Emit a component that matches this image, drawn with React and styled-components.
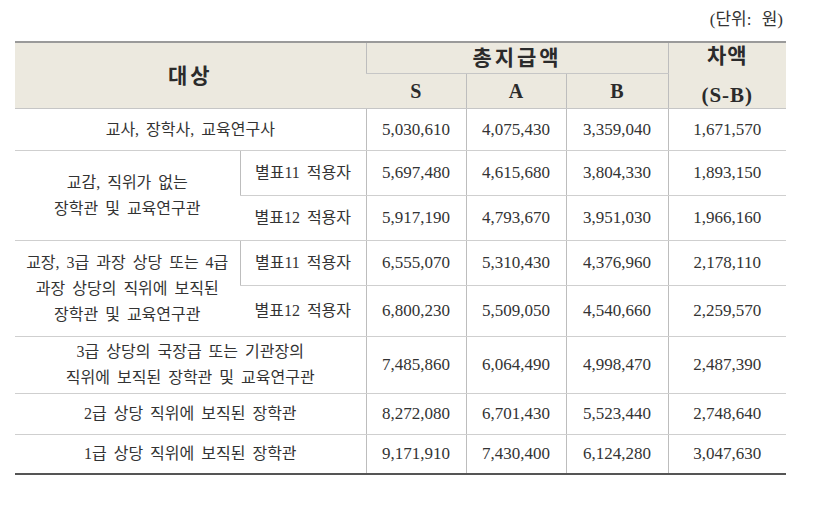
import React from 'react';
import styled, { createGlobalStyle } from 'styled-components';

const GlobalStyle = createGlobalStyle`
  html, body {
    margin: 0;
    padding: 0;
    background: #ffffff;
  }
  body {
    font-family: "Liberation Serif", "Noto Sans CJK KR", serif;
    color: #333333;
  }
`;

const Page = styled.div`
  width: 821px;
  height: 517px;
  padding: 9px 0 0 15px;
  box-sizing: border-box;
`;

const Unit = styled.div`
  width: 768px;
  text-align: right;
  font-size: 17px;
  word-spacing: 6px;
  line-height: 22px;
  height: 32px;
  color: #333;
`;

const Table = styled.table`
  width: 771px;
  table-layout: fixed;
  border-collapse: collapse;
  border-top: 2px solid #9a9a9a;
  border-bottom: 2px solid #555;
`;

const Th = styled.th`
  background: #ece9df;
  font-weight: bold;
  font-size: ${(p) => p.$size || 21}px;
  letter-spacing: ${(p) => p.$spacing || 0}px;
  height: ${(p) => p.$h}px;
  padding: 0;
  color: #2b2b2b;
  border-left: 1px solid #bdbdbd;
  border-bottom: 1px solid #c6c6c6;
  vertical-align: middle;
  line-height: 24px;
  &:first-child {
    border-left: none;
  }
`;

const HeadLine = styled.div`
  line-height: 24px;
  & + & {
    margin-top: 15px;
  }
`;

const Td = styled.td`
  font-size: ${(p) => (p.$num ? 17 : 16)}px;
  text-align: center;
  vertical-align: middle;
  padding: 0;
  height: ${(p) => p.$h}px;
  line-height: 26px;
  border-left: 1px solid #bdbdbd;
  border-bottom: 1px solid #cfcfcf;
  word-spacing: 3px;
  &:first-child {
    border-left: none;
  }
`;

const rows = [
  { label: '교사, 장학사, 교육연구사', vals: ['5,030,610', '4,075,430', '3,359,040', '1,671,570'], h: 41 },
];

const groups = [
  {
    label: ['교감, 직위가 없는', '장학관 및 교육연구관'],
    subs: [
      { sub: '별표11 적용자', vals: ['5,697,480', '4,615,680', '3,804,330', '1,893,150'], h: 44 },
      { sub: '별표12 적용자', vals: ['5,917,190', '4,793,670', '3,951,030', '1,966,160'], h: 44 },
    ],
  },
  {
    label: ['교장, 3급 과장 상당 또는 4급', '과장 상당의 직위에 보직된', '장학관 및 교육연구관'],
    subs: [
      { sub: '별표11 적용자', vals: ['6,555,070', '5,310,430', '4,376,960', '2,178,110'], h: 44 },
      { sub: '별표12 적용자', vals: ['6,800,230', '5,509,050', '4,540,660', '2,259,570'], h: 50 },
    ],
  },
];

const tail = [
  { label: ['3급 상당의 국장급 또는 기관장의', '직위에 보직된 장학관 및 교육연구관'], vals: ['7,485,860', '6,064,490', '4,998,470', '2,487,390'], h: 56 },
  { label: ['2급 상당 직위에 보직된 장학관'], vals: ['8,272,080', '6,701,430', '5,523,440', '2,748,640'], h: 40 },
  { label: ['1급 상당 직위에 보직된 장학관'], vals: ['9,171,910', '7,430,400', '6,124,280', '3,047,630'], h: 38 },
];

const Lines = ({ lines }) =>
  lines.map((l, i) => (
    <React.Fragment key={i}>
      {i > 0 && <br />}
      {l}
    </React.Fragment>
  ));

export default function App() {
  return (
    <Page>
      <GlobalStyle />
      <Unit>(단위: 원)</Unit>
      <Table>
        <colgroup>
          <col style={{ width: 225 }} />
          <col style={{ width: 126 }} />
          <col style={{ width: 100 }} />
          <col style={{ width: 100 }} />
          <col style={{ width: 102 }} />
          <col style={{ width: 118 }} />
        </colgroup>
        <thead>
          <tr>
            <Th colSpan={2} rowSpan={2} $spacing={3}>대상</Th>
            <Th colSpan={3} $h={30} $spacing={3}>총지급액</Th>
            <Th rowSpan={2} $spacing={1}>
              <HeadLine>차액</HeadLine>
              <HeadLine>(S-B)</HeadLine>
            </Th>
          </tr>
          <tr>
            <Th $h={34} $size={20}>S</Th>
            <Th $h={34} $size={20}>A</Th>
            <Th $h={34} $size={20}>B</Th>
          </tr>
        </thead>
        <tbody>
          {rows.map((r) => (
            <tr key={r.label}>
              <Td colSpan={2} $h={r.h}>{r.label}</Td>
              {r.vals.map((v) => (
                <Td key={v} $num $h={r.h}>{v}</Td>
              ))}
            </tr>
          ))}
          {groups.map((g) =>
            g.subs.map((s, i) => (
              <tr key={g.label[0] + i}>
                {i === 0 && (
                  <Td rowSpan={g.subs.length}>
                    <Lines lines={g.label} />
                  </Td>
                )}
                <Td $h={s.h}>{s.sub}</Td>
                {s.vals.map((v) => (
                  <Td key={v} $num $h={s.h}>{v}</Td>
                ))}
              </tr>
            ))
          )}
          {tail.map((r) => (
            <tr key={r.label[0]}>
              <Td colSpan={2} $h={r.h}>
                <Lines lines={r.label} />
              </Td>
              {r.vals.map((v) => (
                <Td key={v} $num $h={r.h}>{v}</Td>
              ))}
            </tr>
          ))}
        </tbody>
      </Table>
    </Page>
  );
}
